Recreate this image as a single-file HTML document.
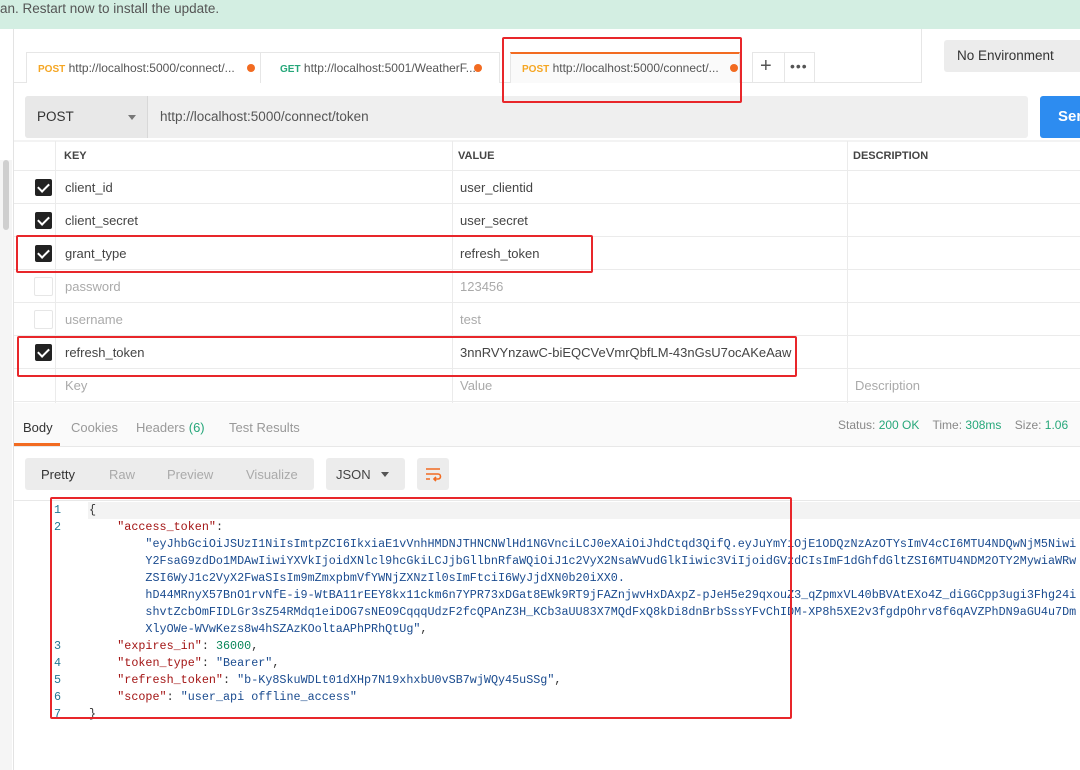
<!DOCTYPE html>
<html><head><meta charset="utf-8"><style>
*{margin:0;padding:0;box-sizing:border-box}
body{width:1080px;height:770px;overflow:hidden;background:#fff;font-family:"Liberation Sans",sans-serif;position:relative;color:#333}
.a{position:absolute}
.t{font-size:13px;white-space:nowrap}
.mono{font-family:"Liberation Mono",monospace;font-size:11.75px;white-space:pre;line-height:17px}
.red{position:absolute;border:2px solid #e8262a;border-radius:2px}
.cb{position:absolute;left:35px;width:17px;height:17px;border-radius:2px;background:#222}
.cb::after{content:"";position:absolute;left:5px;top:2px;width:5px;height:9px;border:solid #fff;border-width:0 2px 2px 0;transform:rotate(45deg)}
.cbo{position:absolute;left:34px;width:19px;height:19px;border:1px solid #e6e6e6;border-radius:2px}
.row{position:absolute;left:14px;right:0;height:33px;border-bottom:1px solid #ebebeb}
.s{color:#1a4b8f}.k{color:#a31515}.n{color:#098658}
</style></head><body>
<div class="a" style="left:0;top:0;width:1080px;height:29px;background:#d3eee2"></div>
<div class="a t" style="left:0;top:0;color:#555;line-height:17px;font-size:13.5px">an. Restart now to install the update.</div>
<div class="a" style="left:13px;top:29px;width:1px;height:741px;background:#e3e3e3"></div>
<div class="a" style="left:3px;top:160px;width:6px;height:70px;background:#cfcfcf;border-radius:3px"></div>
<div class="a" style="left:0;top:160px;width:12px;height:610px;background:#f5f5f5;z-index:-1"></div>

<!-- tabs -->
<div class="a" style="left:14px;top:82px;width:907px;height:1px;background:#e6e6e6"></div>
<div class="a" style="left:26px;top:52px;width:236px;height:31px;border:1px solid #e6e6e6;border-bottom:none;background:#fff"></div>
<div class="a t" style="left:38px;top:61px;font-size:12px"><b style="color:#f5a623;font-size:10px">POST</b> <span style="color:#555">http://localhost:5000/connect/...</span></div>
<div class="a" style="left:247px;top:64px;width:8px;height:8px;border-radius:50%;background:#f26b21"></div>
<div class="a" style="left:260px;top:52px;width:240px;height:31px;border:1px solid #e6e6e6;border-bottom:none;background:#fff"></div>
<div class="a t" style="left:280px;top:61px;font-size:12px"><b style="color:#26a77a;font-size:10px">GET</b> <span style="color:#555">http://localhost:5001/WeatherF...</span></div>
<div class="a" style="left:474px;top:64px;width:8px;height:8px;border-radius:50%;background:#f26b21"></div>
<div class="a" style="left:510px;top:52px;width:230px;height:31px;border:1px solid #e6e6e6;border-top:2px solid #f26b21;border-bottom:none;background:#fafafa"></div>
<div class="a t" style="left:522px;top:61px;font-size:12px"><b style="color:#f5a623;font-size:10px">POST</b> <span style="color:#555">http://localhost:5000/connect/...</span></div>
<div class="a" style="left:730px;top:64px;width:8px;height:8px;border-radius:50%;background:#f26b21"></div>
<div class="a" style="left:752px;top:52px;width:63px;height:31px;border:1px solid #e6e6e6;border-bottom:none"></div>
<div class="a" style="left:784px;top:52px;width:1px;height:31px;background:#e6e6e6"></div>
<div class="a" style="left:760px;top:55px;font-size:20px;color:#555">+</div>
<div class="a" style="left:790px;top:58px;font-size:14px;color:#555;letter-spacing:1px">•••</div>
<div class="a" style="left:921px;top:29px;width:1px;height:54px;background:#e6e6e6"></div>
<div class="a t" style="left:944px;top:40px;width:140px;height:32px;background:#ececec;border-radius:3px;padding:8px 13px;color:#333;font-size:13.5px">No Environment</div>

<!-- url -->
<div class="a" style="left:25px;top:96px;width:1003px;height:42px;background:#efefef;border-radius:3px"></div>
<div class="a" style="left:25px;top:96px;width:123px;height:42px;background:#e8e8e8;border-right:1px solid #d8d8d8;border-radius:3px 0 0 3px"></div>
<div class="a t" style="left:37px;top:109px;font-size:13.5px;color:#333">POST</div>
<div class="a" style="left:128px;top:115px;width:0;height:0;border-left:4px solid transparent;border-right:4px solid transparent;border-top:5px solid #777"></div>
<div class="a t" style="left:160px;top:109px;font-size:13.5px;color:#555">http://localhost:5000/connect/token</div>
<div class="a" style="left:1040px;top:96px;width:50px;height:42px;background:#2d8cf0;border-radius:3px"></div>
<div class="a t" style="left:1058px;top:108px;color:#fff;font-size:15px;font-weight:bold">Sen</div>

<!-- table -->
<div class="a" style="left:14px;top:140px;width:1066px;height:2px;background:#f3f3f3"></div>
<div class="row" style="top:141px;height:30px"></div>
<div class="a t" style="left:64px;top:150px;font-size:11px;font-weight:bold;color:#444">KEY</div>
<div class="a t" style="left:458px;top:150px;font-size:11px;font-weight:bold;color:#444">VALUE</div>
<div class="a t" style="left:853px;top:150px;font-size:11px;font-weight:bold;color:#444">DESCRIPTION</div>
<div class="a" style="left:55px;top:141px;width:1px;height:262px;background:#ebebeb"></div>
<div class="a" style="left:452px;top:141px;width:1px;height:262px;background:#ebebeb"></div>
<div class="a" style="left:847px;top:141px;width:1px;height:262px;background:#ebebeb"></div>

<div class="row" style="top:171px"></div><div class="cb" style="top:179px"></div>
<div class="a t" style="left:65px;top:180px;color:#444">client_id</div><div class="a t" style="left:460px;top:180px;color:#444">user_clientid</div>
<div class="row" style="top:204px"></div><div class="cb" style="top:212px"></div>
<div class="a t" style="left:65px;top:213px;color:#444">client_secret</div><div class="a t" style="left:460px;top:213px;color:#444">user_secret</div>
<div class="row" style="top:237px"></div><div class="cb" style="top:245px"></div>
<div class="a t" style="left:65px;top:246px;color:#444">grant_type</div><div class="a t" style="left:460px;top:246px;color:#444">refresh_token</div>
<div class="row" style="top:270px"></div><div class="cbo" style="top:277px"></div>
<div class="a t" style="left:65px;top:279px;color:#aaa">password</div><div class="a t" style="left:460px;top:279px;color:#aaa">123456</div>
<div class="row" style="top:303px"></div><div class="cbo" style="top:310px"></div>
<div class="a t" style="left:65px;top:312px;color:#aaa">username</div><div class="a t" style="left:460px;top:312px;color:#aaa">test</div>
<div class="row" style="top:336px"></div><div class="cb" style="top:344px"></div>
<div class="a t" style="left:65px;top:345px;color:#444">refresh_token</div><div class="a t" style="left:460px;top:345px;color:#444">3nnRVYnzawC-biEQCVeVmrQbfLM-43nGsU7ocAKeAaw</div>
<div class="row" style="top:369px"></div>
<div class="a t" style="left:65px;top:378px;color:#aaa">Key</div><div class="a t" style="left:460px;top:378px;color:#aaa">Value</div><div class="a t" style="left:855px;top:378px;color:#aaa">Description</div>

<!-- response tabs -->
<div class="a" style="left:14px;top:403px;width:1066px;height:44px;background:#fafafa;border-bottom:1px solid #e8e8e8"></div>
<div class="a t" style="left:23px;top:420px;color:#333">Body</div>
<div class="a" style="left:14px;top:443px;width:46px;height:3px;background:#f26b21"></div>
<div class="a t" style="left:71px;top:420px;color:#999">Cookies</div>
<div class="a t" style="left:136px;top:420px;color:#999">Headers <span style="color:#26a77a">(6)</span></div>
<div class="a t" style="left:229px;top:420px;color:#999">Test Results</div>
<div class="a t" style="left:838px;top:418px;font-size:12px;color:#888">Status: <span style="color:#26a77a">200 OK</span>&nbsp;&nbsp;&nbsp; Time: <span style="color:#26a77a">308ms</span>&nbsp;&nbsp;&nbsp; Size: <span style="color:#26a77a">1.06</span></div>

<div class="a" style="left:25px;top:458px;width:289px;height:32px;background:#ececec;border-radius:3px"></div>
<div class="a t" style="left:41px;top:467px;color:#333">Pretty</div>
<div class="a t" style="left:109px;top:467px;color:#aaa">Raw</div>
<div class="a t" style="left:167px;top:467px;color:#aaa">Preview</div>
<div class="a t" style="left:246px;top:467px;color:#aaa">Visualize</div>
<div class="a" style="left:326px;top:458px;width:79px;height:32px;background:#ececec;border-radius:3px"></div>
<div class="a t" style="left:336px;top:467px;color:#444">JSON</div>
<div class="a" style="left:381px;top:472px;border-left:4px solid transparent;border-right:4px solid transparent;border-top:5px solid #555"></div>
<div class="a" style="left:417px;top:458px;width:32px;height:32px;background:#ececec;border-radius:3px"></div>
<svg class="a" style="left:423px;top:464px" width="20" height="20" viewBox="0 0 20 20" fill="none" stroke="#f26b21" stroke-width="1.6"><path d="M3 5h14M3 10h12a2.5 2.5 0 0 1 0 5h-4M13 13l-2 2 2 2M3 15h4"/></svg>

<!-- code -->
<div class="a" style="left:14px;top:500px;width:1066px;height:1px;background:#e8e8e8"></div>
<div class="a" style="left:88px;top:502px;width:992px;height:17px;background:#f3f3f3"></div>
<div class="a mono" style="left:54px;top:502px;color:#237893">1
2
 
 
 
 
 
 
3
4
5
6
7</div>
<div class="a mono" style="left:89px;top:502px;color:#333">{
    <span class="k">"access_token"</span>:
        <span class="s">"eyJhbGciOiJSUzI1NiIsImtpZCI6IkxiaE1vVnhHMDNJTHNCNWlHd1NGVnciLCJ0eXAiOiJhdCtqd3QifQ.eyJuYmYiOjE1ODQzNzAzOTYsImV4cCI6MTU4NDQwNjM5Niwi</span>
        <span class="s">Y2FsaG9zdDo1MDAwIiwiYXVkIjoidXNlcl9hcGkiLCJjbGllbnRfaWQiOiJ1c2VyX2NsaWVudGlkIiwic3ViIjoidGVzdCIsImF1dGhfdGltZSI6MTU4NDM2OTY2MywiaWRw</span>
        <span class="s">ZSI6WyJ1c2VyX2FwaSIsIm9mZmxpbmVfYWNjZXNzIl0sImFtciI6WyJjdXN0b20iXX0.</span>
        <span class="s">hD44MRnyX57BnO1rvNfE-i9-WtBA11rEEY8kx11ckm6n7YPR73xDGat8EWk9RT9jFAZnjwvHxDAxpZ-pJeH5e29qxouZ3_qZpmxVL40bBVAtEXo4Z_diGGCpp3ugi3Fhg24i</span>
        <span class="s">shvtZcbOmFIDLGr3sZ54RMdq1eiDOG7sNEO9CqqqUdzF2fcQPAnZ3H_KCb3aUU83X7MQdFxQ8kDi8dnBrbSssYFvChIDM-XP8h5XE2v3fgdpOhrv8f6qAVZPhDN9aGU4u7Dm</span>
        <span class="s">XlyOWe-WVwKezs8w4hSZAzKOoltaAPhPRhQtUg"</span>,
    <span class="k">"expires_in"</span>: <span class="n">36000</span>,
    <span class="k">"token_type"</span>: <span class="s">"Bearer"</span>,
    <span class="k">"refresh_token"</span>: <span class="s">"b-Ky8SkuWDLt01dXHp7N19xhxbU0vSB7wjWQy45uSSg"</span>,
    <span class="k">"scope"</span>: <span class="s">"user_api offline_access"</span>
}</div>

<!-- red boxes -->
<div class="red" style="left:502px;top:37px;width:240px;height:66px"></div>
<div class="red" style="left:16px;top:235px;width:577px;height:38px"></div>
<div class="red" style="left:17px;top:336px;width:780px;height:41px"></div>
<div class="red" style="left:50px;top:497px;width:742px;height:222px"></div>
</body></html>
